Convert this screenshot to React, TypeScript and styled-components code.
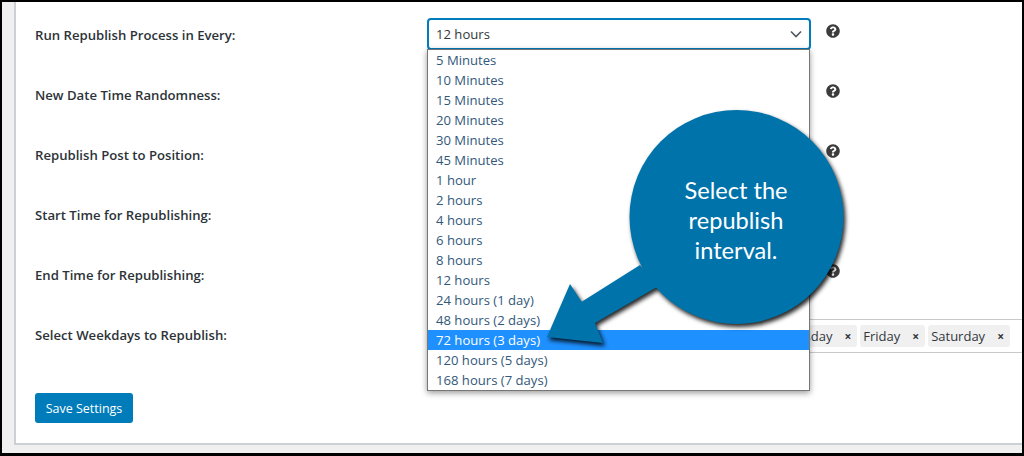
import styled, { createGlobalStyle } from "styled-components";
import { FaQuestionCircle } from "react-icons/fa";

const GlobalStyle = createGlobalStyle`
  html, body {
    margin: 0;
    padding: 0;
    background: #000;
  }
  body {
    font-family: "Open Sans", "Noto Sans", sans-serif;
  }
`;

const Frame = styled.div`
  position: relative;
  box-sizing: border-box;
  width: 1024px;
  height: 456px;
  border: solid #000;
  border-width: 2px 2px 3px 2px;
  overflow: hidden;
`;

const Page = styled.div`
  box-sizing: border-box;
  height: 100%;
  padding: 0 0 8px 12px;
  background: #f0f0f1;
`;

const Card = styled.div`
  box-sizing: border-box;
  height: 100%;
  padding: 16px 0 0 19px;
  background: #fff;
  border: solid #ccd0d4;
  border-width: 0 0 2px 2px;
`;

const Row = styled.div`
  display: grid;
  grid-template-columns: 392px 384px auto;
  height: 60px;
`;

const Label = styled.div`
  padding-top: 7px;
  font-size: 13.15px;
  font-weight: 600;
  line-height: 20px;
  color: #2c3338;
`;

const Select = styled.div`
  box-sizing: border-box;
  display: flex;
  align-items: center;
  justify-content: space-between;
  height: 32px;
  padding: 0 7px;
  border: 2px solid #007cba;
  border-radius: 4px;
  background: #fff;
  font-size: 13.1px;
  color: #32373c;
`;

const Help = styled.div`
  padding: 6px 0 0 15px;
  font-size: 14px;
  line-height: 1;
  color: #3c3c3c;
`;

const Chips = styled.div`
  box-sizing: border-box;
  grid-column: 2 / 4;
  display: flex;
  justify-content: flex-end;
  gap: 3px;
  height: 34px;
  margin-top: 1px;
  padding: 5px 12px 0 0;
  border: solid #c9c9c9;
  border-width: 1px 0;
`;

const Chip = styled.div`
  display: flex;
  align-items: center;
  justify-content: space-between;
  box-sizing: border-box;
  height: 22px;
  gap: 12px;
  padding: 0 6px 0 3px;
  border-radius: 3px;
  background: #f0f0f0;
  font-size: 13px;
  color: #32373c;
`;

const ChipClose = styled.span`
  font-size: 12px;
  font-weight: 700;
  color: #32373c;
`;

const SaveButton = styled.button`
  display: block;
  width: 98px;
  height: 30px;
  margin-top: 15px;
  padding: 0;
  border: 0;
  border-radius: 3px;
  background: #007cba;
  color: #fff;
  font-family: inherit;
  font-size: 12.5px;
`;

const Dropdown = styled.ul`
  position: absolute;
  top: 47px;
  left: 425px;
  box-sizing: border-box;
  width: 383px;
  margin: 0;
  padding: 0;
  list-style: none;
  background: #fff;
  border: 1px solid #767676;
  box-shadow: 0 2px 6px rgba(0, 0, 0, 0.4);
`;

const Option = styled.li<{ $active?: boolean }>`
  height: 20px;
  padding-left: 8px;
  font-size: 13.1px;
  line-height: 20px;
  background: ${(p) => (p.$active ? "#1e90ff" : "transparent")};
  color: ${(p) => (p.$active ? "#fff" : "#32587a")};
`;

const Callout = styled.div`
  position: absolute;
  top: 106px;
  left: 536px;
  width: 310px;
  height: 245px;
`;

const CalloutShape = styled.svg`
  display: block;
  filter: drop-shadow(2px 3px 2px rgba(0, 0, 0, 0.85));
`;

const CalloutText = styled.div`
  position: absolute;
  top: 67px;
  left: 133px;
  width: 130px;
  font-family: Lato, "Open Sans", sans-serif;
  font-size: 23.6px;
  line-height: 30px;
  text-align: center;
  color: #fff;
`;

const intervals = [
  "5 Minutes",
  "10 Minutes",
  "15 Minutes",
  "20 Minutes",
  "30 Minutes",
  "45 Minutes",
  "1 hour",
  "2 hours",
  "4 hours",
  "6 hours",
  "8 hours",
  "12 hours",
  "24 hours (1 day)",
  "48 hours (2 days)",
  "72 hours (3 days)",
  "120 hours (5 days)",
  "168 hours (7 days)",
];

const labels = [
  "New Date Time Randomness:",
  "Republish Post to Position:",
  "Start Time for Republishing:",
  "End Time for Republishing:",
];

const weekdays = ["Thursday", "Friday", "Saturday"];

function App() {
  return (
    <Frame>
      <GlobalStyle />
      <Page>
        <Card>
          <Row>
            <Label>Run Republish Process in Every:</Label>
            <Select>
              12 hours
              <svg width="12" height="8" viewBox="0 0 12 8" fill="none">
                <path d="M1 1.5l5 5 5-5" stroke="#50575e" strokeWidth="1.6" />
              </svg>
            </Select>
            <Help>
              <FaQuestionCircle />
            </Help>
          </Row>
          {labels.map((label) => (
            <Row key={label}>
              <Label>{label}</Label>
              <div />
              <Help>
                <FaQuestionCircle />
              </Help>
            </Row>
          ))}
          <Row>
            <Label>Select Weekdays to Republish:</Label>
            <Chips>
              {weekdays.map((day) => (
                <Chip key={day}>
                  {day}
                  <ChipClose>×</ChipClose>
                </Chip>
              ))}
            </Chips>
          </Row>
          <SaveButton>Save Settings</SaveButton>
        </Card>
      </Page>
      <Dropdown>
        {intervals.map((item) => (
          <Option key={item} $active={item === "72 hours (3 days)"}>
            {item}
          </Option>
        ))}
      </Dropdown>
      <Callout>
        <CalloutShape width="310" height="245" viewBox="0 0 310 245">
          <circle cx="198.5" cy="109" r="107" fill="#0073aa" />
          <path
            d="M102 157L43.7 193.7 32 176 9 229 65 235 57 215 119 179Z"
            fill="#0073aa"
          />
        </CalloutShape>
        <CalloutText>
          Select the
          <br />
          republish
          <br />
          interval.
        </CalloutText>
      </Callout>
    </Frame>
  );
}

export default App;
